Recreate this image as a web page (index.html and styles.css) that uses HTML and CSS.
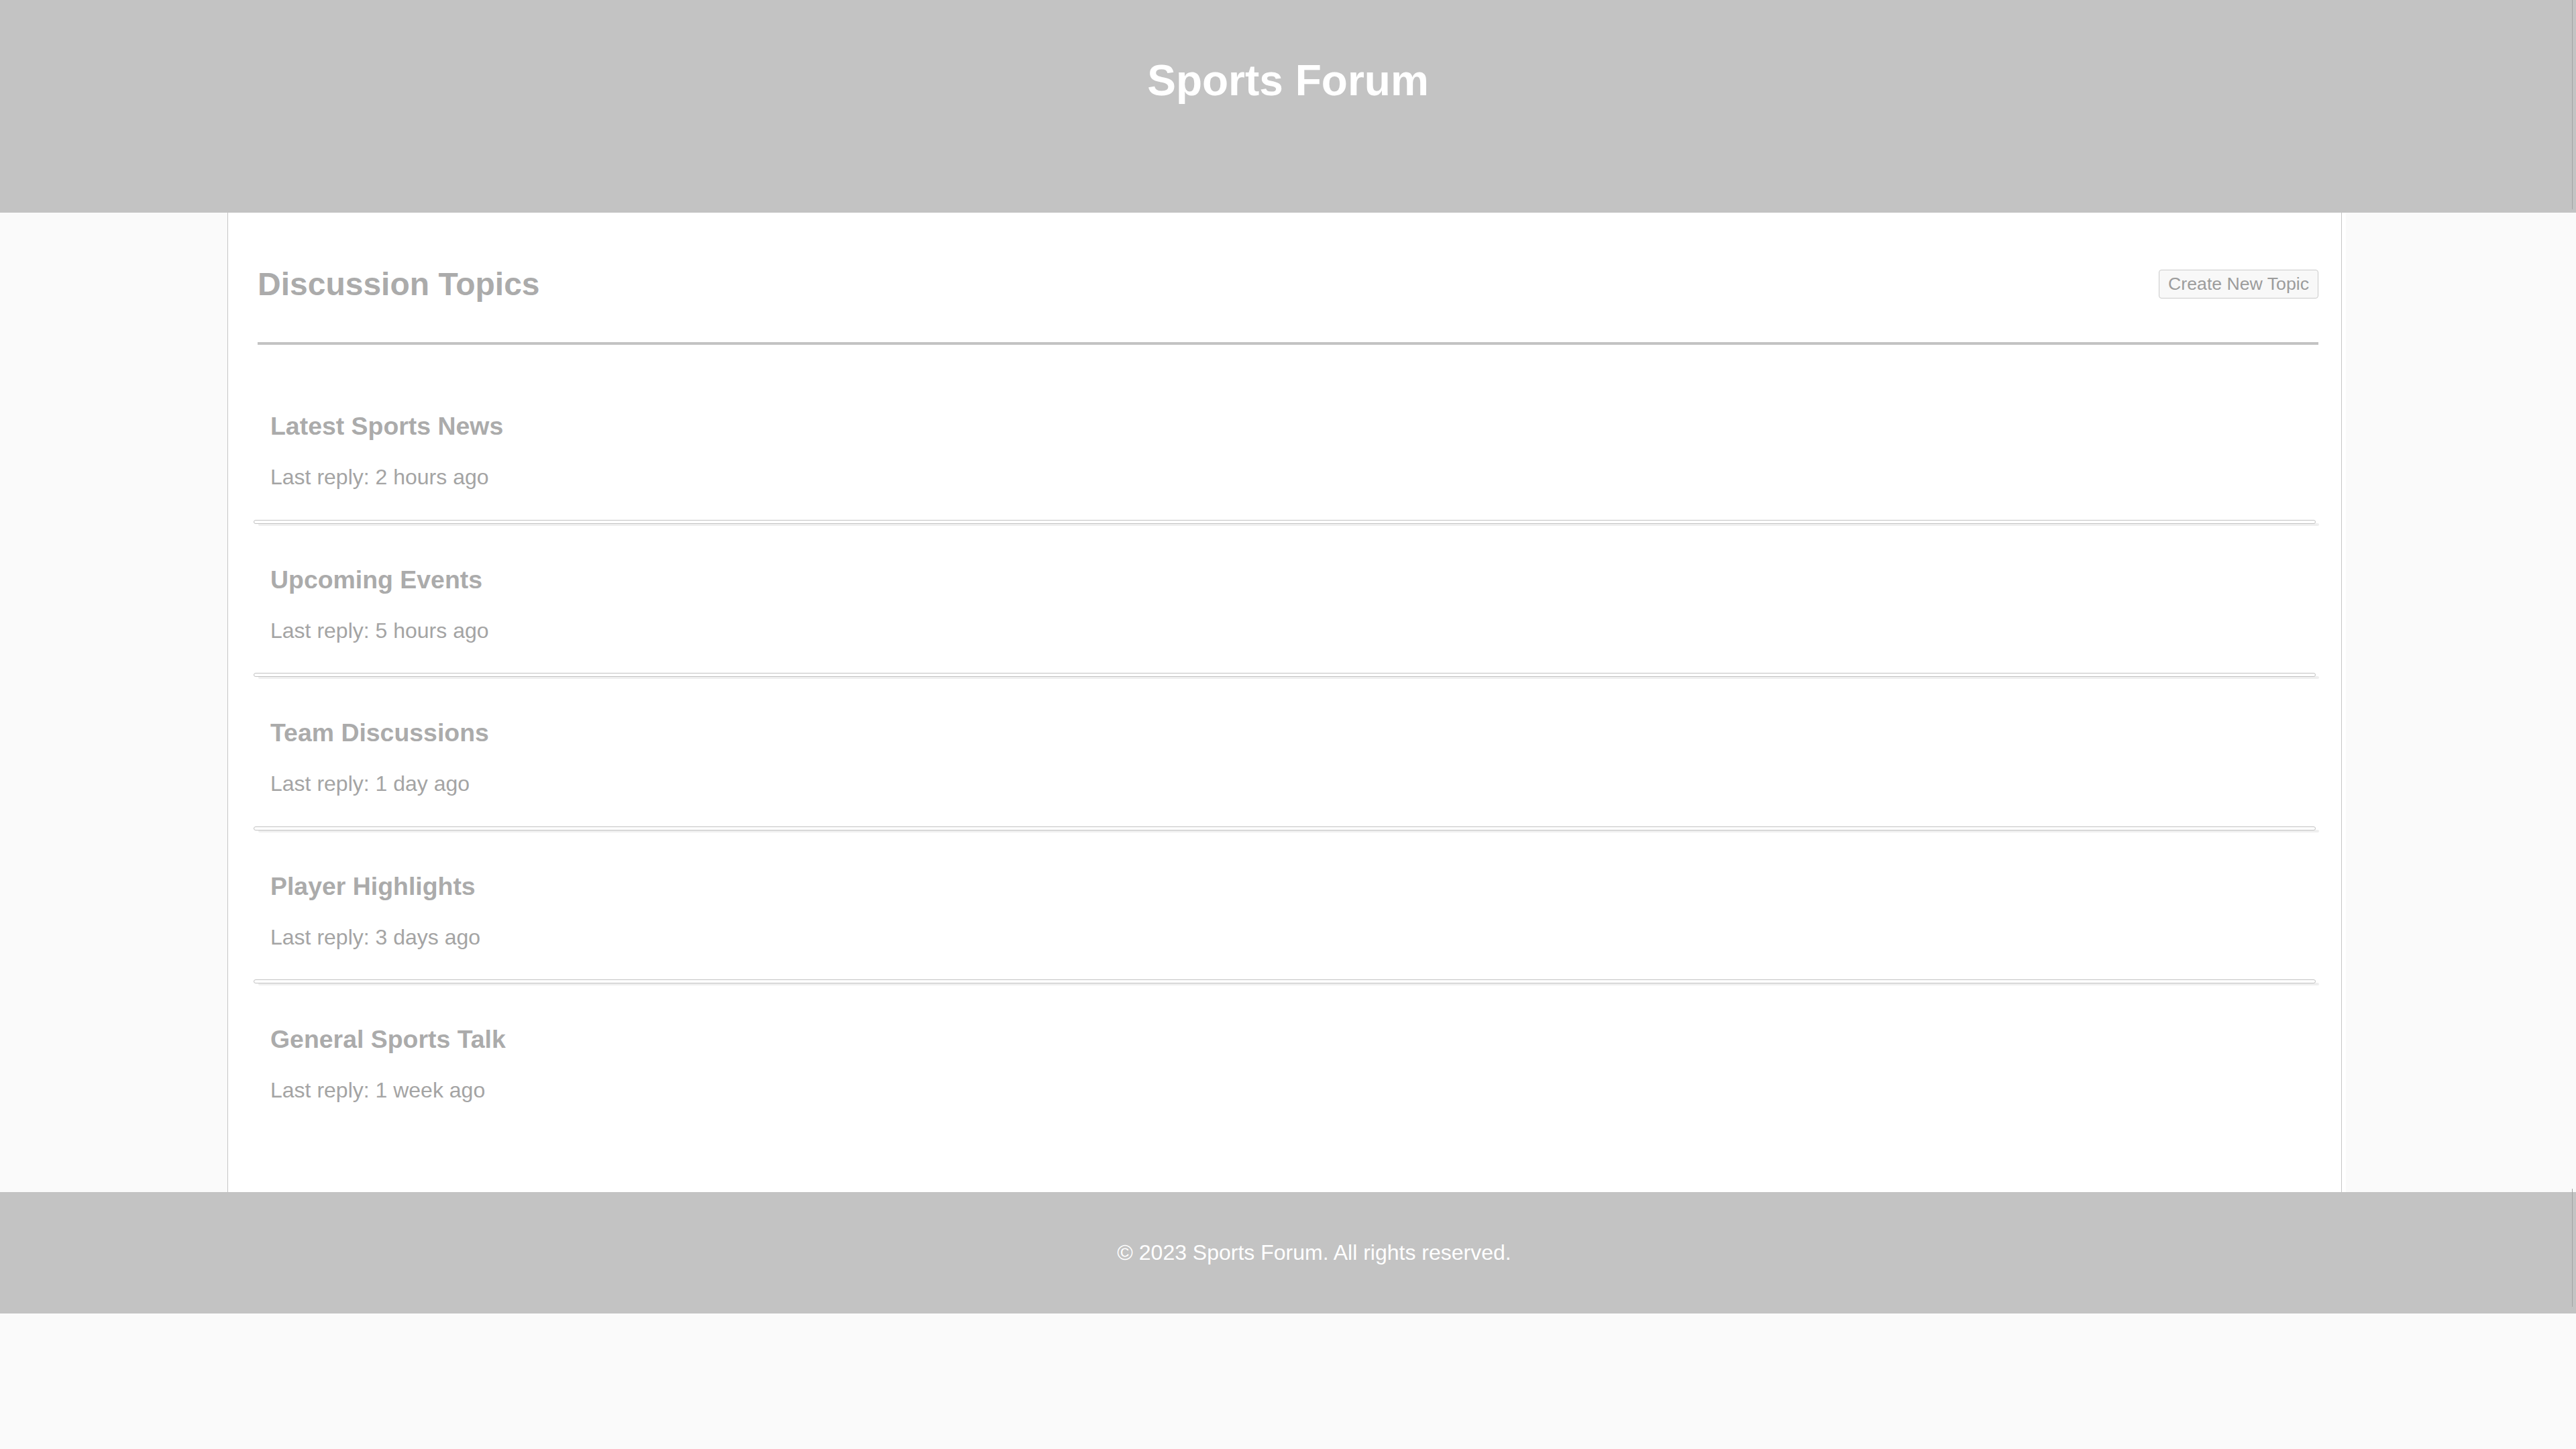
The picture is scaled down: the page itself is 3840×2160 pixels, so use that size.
FILE: index.html
```html
<!DOCTYPE html>
<html lang="en">
<head>
<meta charset="utf-8">
<title>Sports Forum</title>
<link rel="stylesheet" href="styles.css">
</head>
<body>
<header class="site-header">
  <h1 class="site-title">Sports Forum</h1>
</header>
<main class="container">
  <div class="topics-head">
    <h2 class="topics-title">Discussion Topics</h2>
    <button class="new-topic" type="button">Create New Topic</button>
  </div>
  <ul class="topic-list">
    <li class="topic">
      <h3 class="topic-title">Latest Sports News</h3>
      <p class="topic-meta">Last reply: 2 hours ago</p>
    </li>
    <li class="topic">
      <h3 class="topic-title">Upcoming Events</h3>
      <p class="topic-meta">Last reply: 5 hours ago</p>
    </li>
    <li class="topic">
      <h3 class="topic-title">Team Discussions</h3>
      <p class="topic-meta">Last reply: 1 day ago</p>
    </li>
    <li class="topic">
      <h3 class="topic-title">Player Highlights</h3>
      <p class="topic-meta">Last reply: 3 days ago</p>
    </li>
    <li class="topic">
      <h3 class="topic-title">General Sports Talk</h3>
      <p class="topic-meta">Last reply: 1 week ago</p>
    </li>
  </ul>
</main>
<footer class="site-footer">
  <p class="copyright">© 2023 Sports Forum. All rights reserved.</p>
</footer>
</body>
</html>
```
FILE: styles.css
```css
* {
  box-sizing: border-box;
}

html, body {
  margin: 0;
  padding: 0;
}

body {
  background: #fafafa;
  font-family: "Liberation Sans", Arial, sans-serif;
  min-height: 2160px;
}

.site-header {
  position: relative;
  z-index: 1;
  height: 317px;
  padding-top: 83px;
  background: #c3c3c3;
  text-align: center;
}

.site-header::after {
  content: "";
  position: absolute;
  top: 0;
  right: 5px;
  width: 1px;
  height: 312px;
  background: #a3a3a3;
}

.site-title {
  margin: 0;
  font-size: 64px;
  font-weight: bold;
  color: #ffffff;
  line-height: normal;
}

.container {
  margin: -4px 349px 0 339px;
  padding: 83px 34px 133px 44px;
  background: #ffffff;
  border-left: 1px solid #c6c6c6;
  border-right: 1px solid #c6c6c6;
  box-shadow: 6px 0 0 #ffffff;
}

.topics-head {
  display: flex;
  justify-content: space-between;
  align-items: center;
  padding-bottom: 59px;
  border-bottom: 4px solid #c3c3c3;
}

.topics-title {
  margin: 0;
  font-size: 48px;
  font-weight: bold;
  line-height: normal;
  color: #ababab;
}

.new-topic {
  font-family: "Liberation Sans", Arial, sans-serif;
  font-size: 26.67px;
  line-height: normal;
  color: #9c9c9c;
  background: #f8f8f8;
  border: 1px solid #cbcbcb;
  border-radius: 4px;
  padding: 5px 13px;
}

.topic-list {
  list-style: none;
  margin: 38px 4px 0 -6px;
  padding: 0;
}

.topic {
  padding-top: 62px;
}

.topic-title {
  margin: 0 0 36px;
  padding-left: 25px;
  font-size: 37.44px;
  font-weight: bold;
  line-height: normal;
  color: #ababab;
}

.topic-meta {
  margin: 0;
  padding-left: 25px;
  font-size: 32px;
  line-height: normal;
  color: #a4a4a4;
}

.topic::after {
  content: "";
  display: block;
  margin-top: 44.5px;
  height: 4px;
  background: #ffffff;
  border: 1px solid #c2c2c2;
  border-radius: 3px;
  box-shadow: 6px 4px 0 -1px #efefef;
}

.topic:last-child::after {
  display: none;
}

.site-footer {
  position: relative;
  height: 181px;
  padding: 72px 0 0 78px;
  background: #c3c3c3;
  text-align: center;
}

.site-footer::after {
  content: "";
  position: absolute;
  top: -5px;
  right: 5px;
  width: 1px;
  height: 176px;
  background: #a3a3a3;
}

.copyright {
  margin: 0;
  font-size: 32px;
  line-height: normal;
  color: #ffffff;
}
```
